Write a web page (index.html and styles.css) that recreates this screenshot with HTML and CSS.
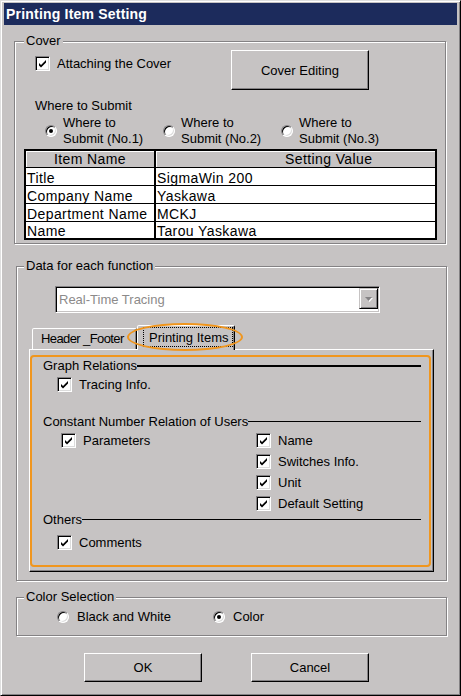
FILE: index.html
```html
<!DOCTYPE html>
<html>
<head>
<meta charset="utf-8">
<link rel="stylesheet" href="styles.css">
</head>
<body>
<div class="window">
  <div class="titlebar">Printing Item Setting</div>

  <div class="group cover">
    <div class="group-label">Cover</div>
    <div class="cover-top">
      <div class="check-item cover-check">
        <span class="cb"><svg viewBox="0 0 13 13" width="13" height="13"><path d="M3 6 L5 8 L10 3 L10 5.5 L5 10.5 L3 8.5 Z"/></svg></span>
        <span>Attaching the Cover</span>
      </div>
      <button class="btn cover-btn">Cover Editing</button>
    </div>
    <div class="submit-label">Where to Submit</div>
    <div class="radios">
      <div class="radio-opt"><span class="rb on"></span><span>Where to<br>Submit (No.1)</span></div>
      <div class="radio-opt"><span class="rb"></span><span>Where to<br>Submit (No.2)</span></div>
      <div class="radio-opt"><span class="rb"></span><span>Where to<br>Submit (No.3)</span></div>
    </div>
    <div class="grid">
      <div class="row head"><div class="cell1">Item Name</div><div class="cell2">Setting Value</div></div>
      <div class="row"><div class="cell1">Title</div><div class="cell2">SigmaWin 200</div></div>
      <div class="row"><div class="cell1">Company Name</div><div class="cell2">Yaskawa</div></div>
      <div class="row"><div class="cell1">Department Name</div><div class="cell2">MCKJ</div></div>
      <div class="row last"><div class="cell1">Name</div><div class="cell2">Tarou Yaskawa</div></div>
    </div>
  </div>

  <div class="group data">
    <div class="group-label">Data for each function</div>
    <div class="combo">
      <div class="combo-text">Real-Time Tracing</div>
      <div class="combo-btn"><svg width="9" height="6" viewBox="0 0 9 6"><path d="M2 2h7l-3.5 4z" fill="#fff"/><path d="M1 1h7l-3.5 4z" fill="#848284"/></svg></div>
    </div>
    <div class="tabs">
      <div class="tabstrip">
        <div class="tab tab1">Header _Footer</div>
        <div class="tab tab2"><span class="focus">Printing Items</span></div>
        <div class="ellipse"></div>
      </div>
      <div class="panel">
        <div class="annot">
          <div class="sec g"><span>Graph Relations</span><span class="rule thick"></span></div>
          <div class="check-item tracing">
            <span class="cb"><svg viewBox="0 0 13 13" width="13" height="13"><path d="M3 6 L5 8 L10 3 L10 5.5 L5 10.5 L3 8.5 Z"/></svg></span>
            <span>Tracing Info.</span>
          </div>
          <div class="sec c"><span>Constant Number Relation of Users</span><span class="rule"></span></div>
          <div class="cols">
            <div class="col-left">
              <div class="check-item">
                <span class="cb"><svg viewBox="0 0 13 13" width="13" height="13"><path d="M3 6 L5 8 L10 3 L10 5.5 L5 10.5 L3 8.5 Z"/></svg></span>
                <span>Parameters</span>
              </div>
            </div>
            <div class="col-right">
              <div class="check-item">
                <span class="cb"><svg viewBox="0 0 13 13" width="13" height="13"><path d="M3 6 L5 8 L10 3 L10 5.5 L5 10.5 L3 8.5 Z"/></svg></span>
                <span>Name</span>
              </div>
              <div class="check-item">
                <span class="cb"><svg viewBox="0 0 13 13" width="13" height="13"><path d="M3 6 L5 8 L10 3 L10 5.5 L5 10.5 L3 8.5 Z"/></svg></span>
                <span>Switches Info.</span>
              </div>
              <div class="check-item">
                <span class="cb"><svg viewBox="0 0 13 13" width="13" height="13"><path d="M3 6 L5 8 L10 3 L10 5.5 L5 10.5 L3 8.5 Z"/></svg></span>
                <span>Unit</span>
              </div>
              <div class="check-item">
                <span class="cb"><svg viewBox="0 0 13 13" width="13" height="13"><path d="M3 6 L5 8 L10 3 L10 5.5 L5 10.5 L3 8.5 Z"/></svg></span>
                <span>Default Setting</span>
              </div>
            </div>
          </div>
          <div class="sec o"><span>Others</span><span class="rule"></span></div>
          <div class="check-item comments">
            <span class="cb"><svg viewBox="0 0 13 13" width="13" height="13"><path d="M3 6 L5 8 L10 3 L10 5.5 L5 10.5 L3 8.5 Z"/></svg></span>
            <span>Comments</span>
          </div>
        </div>
      </div>
    </div>
  </div>

  <div class="group colorsel">
    <div class="group-label">Color Selection</div>
    <div class="color-radios">
      <div class="opt"><span class="rb"></span><span>Black and White</span></div>
      <div class="opt"><span class="rb on"></span><span>Color</span></div>
    </div>
  </div>

  <div class="buttons">
    <button class="btn std">OK</button>
    <button class="btn std">Cancel</button>
  </div>
</div>
</body>
</html>
```
FILE: styles.css
```css
* { box-sizing: border-box; }
body {
  margin: 0;
  font-family: "Liberation Sans", Arial, sans-serif;
  font-size: 13px;
  color: #000;
}
.window {
  width: 461px;
  height: 696px;
  background: #c6c3c3;
  border: 1px solid;
  border-color: #dfdfdf #000 #000 #dfdfdf;
  box-shadow: inset 1px 1px #fff, inset -1px -1px #848284;
  padding: 2px 3px 0 3px;
  overflow: hidden;
}
.titlebar {
  height: 22px;
  background: #1c2b5c;
  color: #fff;
  font-weight: bold;
  font-size: 14px;
  letter-spacing: 0.2px;
  line-height: 22px;
  padding-left: 2px;
}
.group {
  border: 1px solid #848284;
  box-shadow: inset 1px 1px #fff, 1px 1px #fff;
}
.group-label {
  display: table;
  margin: -8px 0 0 9px;
  padding: 0 2px;
  background: #c6c3c3;
  line-height: 14px;
}
.cover { margin: 16px 11px 0 10px; padding-bottom: 3px; }
.cover-top { display: flex; align-items: flex-start; margin-top: 2px; height: 40px; }
.check-item { display: flex; align-items: center; gap: 7px; line-height: 14px; height: 15px; white-space: nowrap; }
.cover-check { margin: 6px 0 0 20px; width: 196px; }
.cb {
  width: 15px; height: 15px; flex: none;
  background: #fff;
  border: 1px solid;
  border-color: #848284 #fff #fff #848284;
  box-shadow: inset 1px 1px #000, inset -1px -1px #dcdcdc;
  display: flex;
}
.cb svg { display: block; fill: #000; }
.btn {
  background: #c6c3c3;
  border: 1px solid;
  border-color: #fff #000 #000 #fff;
  box-shadow: inset -1px -1px #848284;
  font: inherit;
  color: #000;
  padding: 0;
  display: flex;
  align-items: center;
  justify-content: center;
}
.cover-btn { width: 138px; height: 40px; }
.submit-label { margin: 9px 0 0 20px; line-height: 14px; }
.radios { display: flex; margin: 2px 0 0 30px; }
.radio-opt { display: flex; align-items: center; gap: 6px; width: 118px; line-height: 16px; white-space: nowrap; }
.rb {
  width: 12px; height: 12px; flex: none;
  border-radius: 50%;
  border: 1px solid;
  border-color: #848284 #fff #fff #848284;
  box-shadow: inset 1px 1px #000, inset -1px -1px #dcdcdc;
  background: #fff;
  display: flex; align-items: center; justify-content: center;
}
.rb.on::after { content: ""; width: 4px; height: 4px; border-radius: 50%; background: #000; }

.grid {
  margin: 2px 0 0 9px;
  width: 413px;
  height: 91px;
  border: 2px solid #000;
  background: #fff;
  overflow: hidden;
  font-size: 14px;
  letter-spacing: 0.4px;
}
.row { display: flex; height: 18px; border-bottom: 1px solid #000; }
.row.head { height: 17px; background: #c6c3c3; }
.row.last { border-bottom: none; height: 16px; }
.cell1 { width: 130px; border-right: 2px solid #000; padding: 3px 0 0 1px; line-height: 14px; white-space: nowrap; overflow: hidden; }
.cell2 { flex: 1; padding: 3px 0 0 1px; line-height: 14px; white-space: nowrap; overflow: hidden; }
.row.last .cell1, .row.last .cell2 { padding-top: 2px; }
.head .cell1 { text-align: center; padding: 1px 0 0 0; box-shadow: inset 1px 1px #fff; }
.head .cell2 { padding: 1px 0 0 129px; box-shadow: inset 1px 1px #fff; }

.data { margin: 22px 10px 0 12px; padding-bottom: 8px; }
.data .group-label { margin-left: 7px; }
.combo {
  margin: 13px 0 0 38px;
  width: 325px; height: 27px;
  border: 1px solid;
  border-color: #848284 #fff #fff #848284;
  box-shadow: inset 1px 1px #000, inset -1px -1px #c6c3c3;
  background: #fff;
  display: flex;
  padding: 1px;
}
.combo-text { flex: 1; color: #8c8a8a; padding: 5px 0 0 2px; line-height: 14px; }
.combo-btn {
  width: 19px; height: 21px;
  border: 1px solid;
  border-color: #c6c3c3 #000 #000 #c6c3c3;
  box-shadow: inset 1px 1px #fff, inset -1px -1px #848284;
  background: #c6c3c3;
  display: flex; align-items: center; justify-content: center;
}
.combo-btn svg { display: block; }

.tabs { margin: 12px 0 0 12px; width: 405px; }
.tabstrip { position: relative; height: 24px; display: flex; align-items: flex-end; padding-left: 3px; }
.tab {
  background: #c6c3c3;
  border: 1px solid;
  border-bottom: none;
  border-color: #fff #000 transparent #fff;
  box-shadow: inset -1px 0 #848284;
  border-radius: 2px 2px 0 0;
  line-height: 14px;
  white-space: nowrap;
  overflow: hidden;
}
.tab1 { width: 105px; height: 21px; padding: 3px 0 0 8px; letter-spacing: -0.6px; }
.tab2 { width: 98px; height: 25px; margin-bottom: -1px; padding: 1px 0 0 5px; position: relative; z-index: 1; }
.focus { display: inline-block; border: 1px dotted #000; padding: 3px 4px 1px 5px; }
.ellipse {
  position: absolute;
  left: 98px; top: -2px;
  width: 116px; height: 28px;
  border: 2px solid #f0961e;
  border-radius: 50%;
  z-index: 2;
}
.panel {
  height: 223px;
  border: 1px solid;
  border-color: #fff #000 #000 #fff;
  box-shadow: inset -1px -1px #848284;
  padding-top: 5px;
}
.annot {
  width: 401px; height: 212px;
  border: 2px solid #f0961e;
  border-radius: 4px;
}
.sec { display: flex; align-items: flex-start; line-height: 14px; margin: 0 8px 0 11px; white-space: nowrap; }
.rule { flex: 1; border-top: 1px solid #000; margin-top: 6px; }
.rule.thick { border-top-width: 2px; }
.sec.g { margin-top: 2px; }
.tracing { margin: 4px 0 0 25px; }
.sec.c { margin-top: 23px; }
.cols { display: flex; margin-top: 4px; }
.col-left { margin-left: 29px; width: 195px; }
.col-right { display: flex; flex-direction: column; gap: 6px; }
.sec.o { margin-top: 2px; }
.comments { margin: 8px 0 0 25px; }

.colorsel { margin: 16px 10px 0 12px; padding-bottom: 11px; }
.colorsel .group-label { margin-left: 7px; }
.color-radios { display: flex; margin: 6px 0 0 40px; line-height: 14px; }
.color-radios .opt { display: flex; align-items: center; gap: 8px; width: 156px; white-space: nowrap; }

.buttons { display: flex; gap: 49px; margin: 17px 0 0 80px; }
.btn.std { width: 118px; height: 29px; }
```
